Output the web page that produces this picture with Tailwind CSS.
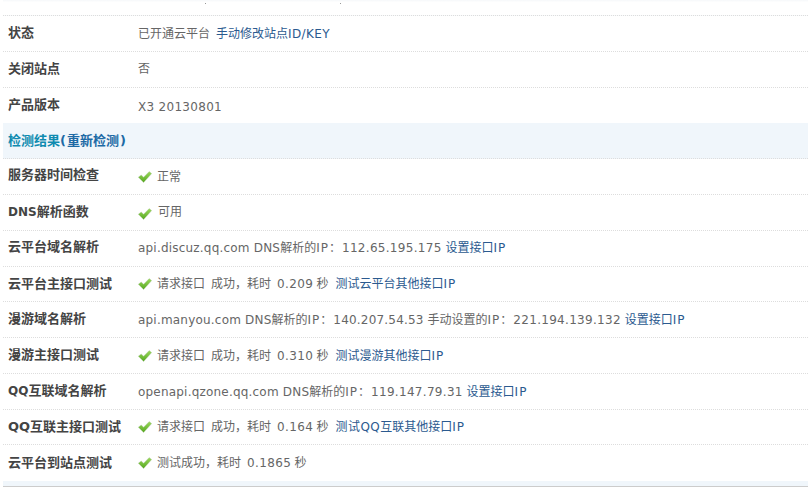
<!DOCTYPE html>
<html lang="zh-CN">
<head>
    <meta charset="UTF-8">
    <title>云平台诊断工具</title>
    <script src="https://cdn.jsdelivr.net/npm/@tailwindcss/browser@4"></script>
</head>
<body class="bg-white overflow-hidden font-['DejaVu_Sans','Noto_Sans_CJK_SC',sans-serif] text-[12px] text-[#666]">
    <svg class="absolute w-0 h-0">
        <defs>
            <linearGradient id="okfill" x1="0" y1="0" x2="0" y2="1">
                <stop offset="0" stop-color="#9bd85c"/>
                <stop offset="1" stop-color="#55a81f"/>
            </linearGradient>
        </defs>
        <symbol id="ok" viewBox="0 0 14 12">
            <path d="M0.3 6.2 L3.2 4 L5.6 6.2 L11.2 0.6 L13.7 2.6 L5.6 11.6 Z" fill="url(#okfill)" stroke="#b7c7ad" stroke-width="0.4"/>
        </symbol>
    </svg>
    <div class="relative w-[808px] h-[487px] pl-[3px] flex flex-col">
        <div class="absolute left-[205px] top-[3px] w-[1px] h-[1px] bg-[#999]"></div>
        <div class="absolute left-[340px] top-[3px] w-[1px] h-[1px] bg-[#999]"></div>
        <div class="h-[16px] border-b border-dotted border-[#ddd] bg-gradient-to-b from-[#f6f8fa] to-white to-[15%]"></div>

        <div class="h-[36px] shrink-0 flex items-center border-b border-dotted border-[#ddd]">
            <div class="w-[135px] pl-[5px] pb-[2px] font-bold text-[13px] text-[#444]">状态</div>
            <div>已开通云平台<a class="ml-[6px] text-[#2b5a8f]">手动修改站点<span class="tracking-[.4px]">ID/KEY</span></a></div>
        </div>
        <div class="h-[36px] shrink-0 flex items-center border-b border-dotted border-[#ddd]">
            <div class="w-[135px] pl-[5px] pb-[2px] font-bold text-[13px] text-[#444]">关闭站点</div>
            <div class="pb-[1px]">否</div>
        </div>
        <div class="h-[35px] shrink-0 flex items-center">
            <div class="w-[135px] pl-[5px] pb-[1px] font-bold text-[13px] text-[#444]">产品版本</div>
            <div class="pt-[2px] tracking-[.3px]">X3 20130801</div>
        </div>

        <div class="h-[36px] shrink-0 flex items-center pl-[5px] bg-[#f0f6fb] border-b border-dotted border-[#ddd] font-bold text-[13px] text-[#0f8bb0]">
            检测结果<span class="text-[#1d6aa5]"><span class="mr-[1px]">(</span>重新检测<span class="ml-[1px]">)</span></span>
        </div>

        <div class="h-[36px] shrink-0 flex items-center border-b border-dotted border-[#ddd]">
            <div class="w-[135px] pl-[5px] pb-[3px] font-bold text-[13px] text-[#444]">服务器时间检查</div>
            <div class="flex items-center"><svg class="w-[14px] h-[12px] mr-[5px]"><use href="#ok"/></svg>正常</div>
        </div>
        <div class="h-[36px] shrink-0 flex items-center border-b border-dotted border-[#ddd]">
            <div class="w-[135px] pl-[5px] pb-[2px] font-bold text-[13px] text-[#444]"><span class="text-[12px]">DNS</span>解析函数</div>
            <div class="flex items-center"><svg class="w-[14px] h-[12px] mr-[6px] mt-[2px]"><use href="#ok"/></svg><span class="pb-[2px]">可用</span></div>
        </div>
        <div class="h-[36px] shrink-0 flex items-center border-b border-dotted border-[#ddd]">
            <div class="w-[135px] pl-[5px] pb-[3px] font-bold text-[13px] text-[#444]">云平台域名解析</div>
            <div class="pb-[1px]"><span class="tracking-[.2px]">api.discuz.qq.com DNS</span>解析的<span class="tracking-[1px]">IP：</span><span class="tracking-[.3px]">112.65.195.175</span> <a class="text-[#2b5a8f]">设置接口<span class="tracking-[1px]">IP</span></a></div>
        </div>
        <div class="h-[35px] shrink-0 flex items-center border-b border-dotted border-[#ddd]">
            <div class="w-[135px] pl-[5px] pb-[1px] font-bold text-[13px] text-[#444]">云平台主接口测试</div>
            <div class="flex items-center"><svg class="w-[14px] h-[12px] mr-[5px]"><use href="#ok"/></svg><span>请求接口<span class="ml-[6px]">成功，耗时</span><span class="ml-[6px] tracking-[.4px]">0.209</span><span class="ml-[3px]">秒</span></span><a class="ml-[7px] text-[#2b5a8f]">测试云平台其他接口<span class="tracking-[1px]">IP</span></a></div>
        </div>
        <div class="h-[36px] shrink-0 flex items-center border-b border-dotted border-[#ddd]">
            <div class="w-[135px] pl-[5px] pb-[1px] font-bold text-[13px] text-[#444]">漫游域名解析</div>
            <div><span class="tracking-[.2px]">api.manyou.com DNS</span>解析的<span class="tracking-[1px]">IP：</span><span class="tracking-[.2px]">140.207.54.53</span> 手动设置的<span class="tracking-[1px]">IP：</span><span class="tracking-[.3px]">221.194.139.132</span> <a class="text-[#2b5a8f]">设置接口<span class="tracking-[1px]">IP</span></a></div>
        </div>
        <div class="h-[36px] shrink-0 flex items-center border-b border-dotted border-[#ddd]">
            <div class="w-[135px] pl-[5px] pb-[1px] font-bold text-[13px] text-[#444]">漫游主接口测试</div>
            <div class="flex items-center"><svg class="w-[14px] h-[12px] mr-[5px]"><use href="#ok"/></svg><span>请求接口<span class="ml-[6px]">成功，耗时</span><span class="ml-[6px] tracking-[.4px]">0.310</span><span class="ml-[3px]">秒</span></span><a class="ml-[7px] text-[#2b5a8f]">测试漫游其他接口<span class="tracking-[1px]">IP</span></a></div>
        </div>
        <div class="h-[36px] shrink-0 flex items-center border-b border-dotted border-[#ddd]">
            <div class="w-[135px] pl-[5px] pb-[1px] font-bold text-[13px] text-[#444]"><span class="text-[12px]">QQ</span>互联域名解析</div>
            <div><span class="tracking-[.2px]">openapi.qzone.qq.com DNS</span>解析的<span class="tracking-[1px]">IP：</span><span class="tracking-[.3px]">119.147.79.31</span> <a class="text-[#2b5a8f]">设置接口<span class="tracking-[1px]">IP</span></a></div>
        </div>
        <div class="h-[35px] shrink-0 flex items-center border-b border-dotted border-[#ddd]">
            <div class="w-[135px] pl-[5px] font-bold text-[13px] text-[#444]">QQ互联主接口测试</div>
            <div class="flex items-center"><svg class="w-[14px] h-[12px] mr-[5px]"><use href="#ok"/></svg><span>请求接口<span class="ml-[6px]">成功，耗时</span><span class="ml-[6px] tracking-[.4px]">0.164</span><span class="ml-[3px]">秒</span></span><a class="ml-[7px] text-[#2b5a8f]"><span class="tracking-[.5px]">测试QQ</span>互联其他接口<span class="tracking-[1px]">IP</span></a></div>
        </div>
        <div class="h-[36px] shrink-0 flex items-center">
            <div class="w-[135px] pl-[5px] pb-[1px] font-bold text-[13px] text-[#444]">云平台到站点测试</div>
            <div class="flex items-center"><svg class="w-[14px] h-[12px] mr-[5px]"><use href="#ok"/></svg><span>测试成功，耗时<span class="ml-[6px] tracking-[.4px]">0.1865</span><span class="ml-[3px]">秒</span></span></div>
        </div>
        <div class="h-[6px] shrink-0 bg-[#f0f6fb] border-b border-[#ccc]"></div>
    </div>
</body>
</html>
